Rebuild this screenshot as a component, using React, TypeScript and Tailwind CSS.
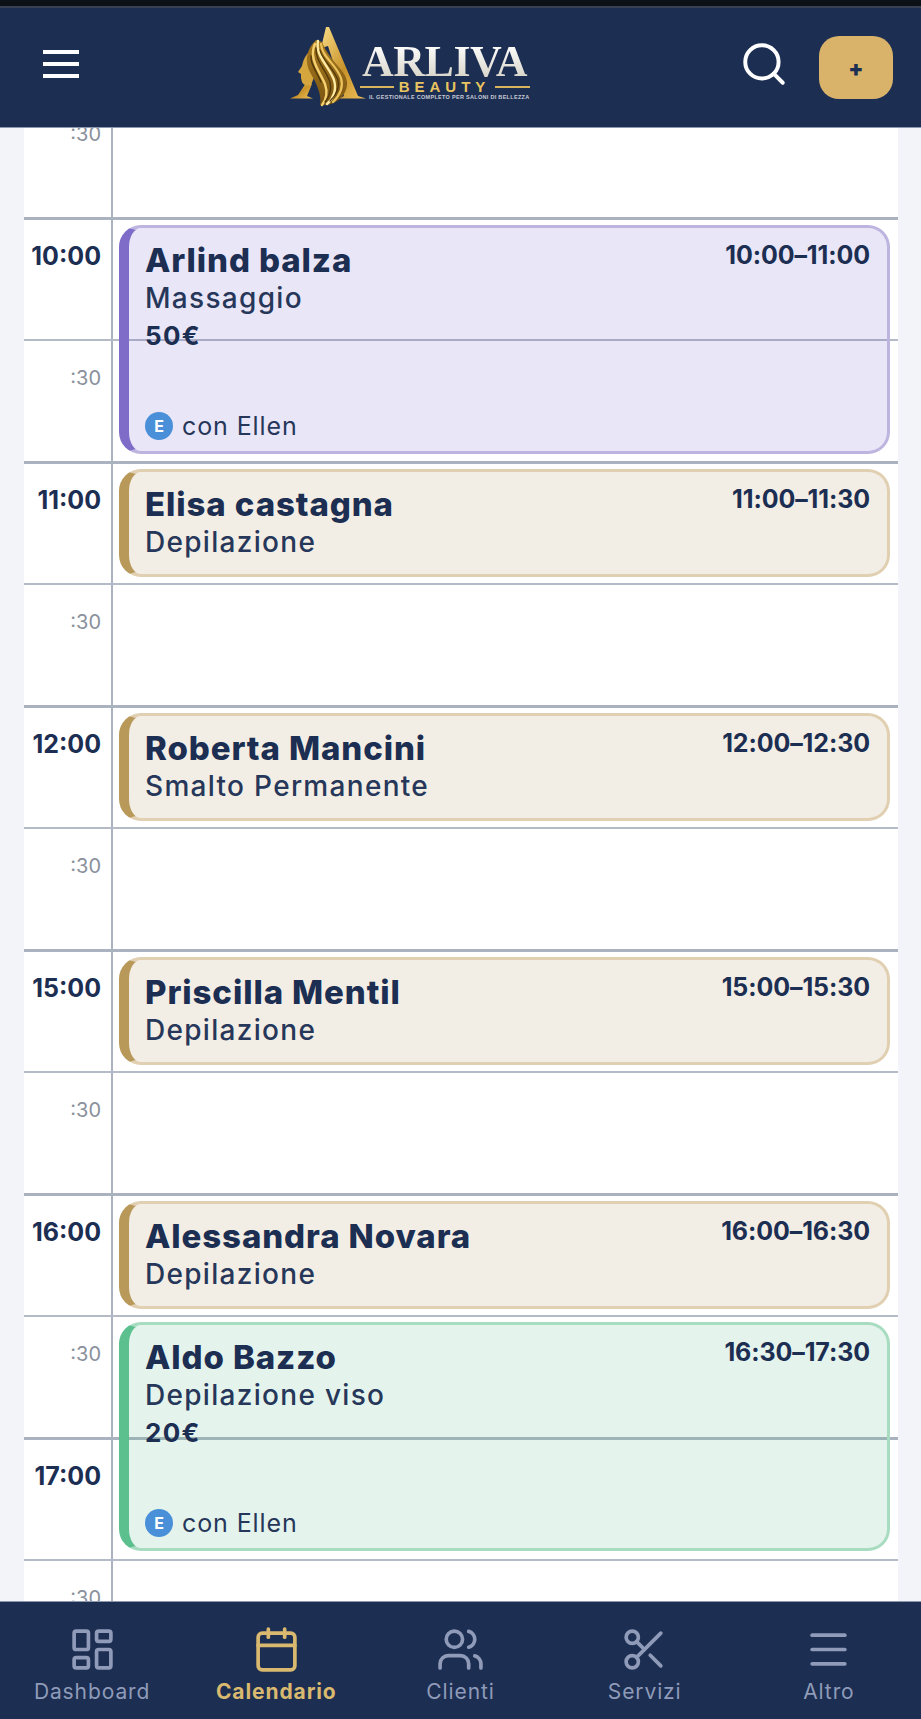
import { Calendar, LayoutDashboard, Menu, Scissors, Search, Users } from "lucide-react";

type Tone = "purple" | "tan" | "green";

interface Booking {
  name: string;
  service: string;
  time: string;
  tone: Tone;
  price?: string;
  staff?: string;
}

interface Slot {
  label: string;
  hour: boolean;
  booking?: Booking;
}

const slots: Slot[] = [
  { label: ":30", hour: false },
  {
    label: "10:00",
    hour: true,
    booking: { name: "Arlind balza", service: "Massaggio", time: "10:00–11:00", tone: "purple", price: "50€", staff: "Ellen" },
  },
  { label: ":30", hour: false },
  {
    label: "11:00",
    hour: true,
    booking: { name: "Elisa castagna", service: "Depilazione", time: "11:00–11:30", tone: "tan" },
  },
  { label: ":30", hour: false },
  {
    label: "12:00",
    hour: true,
    booking: { name: "Roberta Mancini", service: "Smalto Permanente", time: "12:00–12:30", tone: "tan" },
  },
  { label: ":30", hour: false },
  {
    label: "15:00",
    hour: true,
    booking: { name: "Priscilla Mentil", service: "Depilazione", time: "15:00–15:30", tone: "tan" },
  },
  { label: ":30", hour: false },
  {
    label: "16:00",
    hour: true,
    booking: { name: "Alessandra Novara", service: "Depilazione", time: "16:00–16:30", tone: "tan" },
  },
  {
    label: ":30",
    hour: false,
    booking: { name: "Aldo Bazzo", service: "Depilazione viso", time: "16:30–17:30", tone: "green", price: "20€", staff: "Ellen" },
  },
  { label: "17:00", hour: true },
  { label: ":30", hour: false },
];

const toneClasses: Record<Tone, string> = {
  purple: "bg-[#7c6bd0]/[0.17] border-[#bdb5e0] border-l-[#7f6cc8]",
  tan: "bg-[#f3eee5] border-[#e0cfb0] border-l-[#b8995a]",
  green: "bg-[#5cbf8e]/[0.17] border-[#a8dcc0] border-l-[#5cbf8e]",
};

const navItems = [
  { label: "Dashboard", icon: LayoutDashboard },
  { label: "Calendario", icon: Calendar, active: true },
  { label: "Clienti", icon: Users },
  { label: "Servizi", icon: Scissors },
  { label: "Altro", icon: Menu },
];

function LogoMark() {
  return (
    <svg viewBox="0 0 100 90" className="h-[90px] w-[100px] shrink-0">
      <defs>
        <linearGradient id="gold" x1="0" y1="0" x2="1" y2="1">
          <stop offset="0" stopColor="#f8dc86" />
          <stop offset="0.55" stopColor="#c8922a" />
          <stop offset="1" stopColor="#efc25a" />
        </linearGradient>
        <linearGradient id="hair" x1="0" y1="0" x2="0" y2="1">
          <stop offset="0" stopColor="#a87a1e" />
          <stop offset="1" stopColor="#7a5512" />
        </linearGradient>
      </defs>
      {/* the big A, hair sits on top of it */}
      <polygon points="42,7 45,7 74,76 82,78.5 55,78.5 60,76 44,26 37,28" fill="url(#gold)" />
      <polygon points="24,60 28,64 23,76 29,78.5 6,78.5 14,75" fill="url(#gold)" />
      {/* face */}
      <path d="M27,30 C20,36 19,42 18,46 L14,52 L17,54 L17,58 L18,62 C20,66 24,66 27,65 L33,50 Z" fill="#d5a53e" />
      {/* hair */}
      <path d="M32,20 C22,30 20,42 27,54 C33,64 38,76 36,85 C50,87 64,76 63,62 C62,50 46,42 38,22 Z" fill="url(#hair)" />
      <g fill="none" strokeLinecap="round">
        <path d="M31,24 C24,38 36,52 41,64 C44,73 42,80 38,85" stroke="#f4d070" strokeWidth="2.4" />
        <path d="M34,21 C31,36 45,46 50,60 C53,70 49,79 43,84" stroke="#ffeaa2" strokeWidth="2.4" />
        <path d="M37,24 C38,37 52,44 57,58 C60,68 55,76 49,82" stroke="#ecc35c" strokeWidth="2.2" />
        <path d="M27,36 C26,44 33,52 37,62" stroke="#4e360a" strokeWidth="1.4" />
        <path d="M32,28 C31,40 42,50 46,62 C48,70 46,76 41,82" stroke="#4e360a" strokeWidth="1.3" />
        <path d="M36,30 C38,40 49,47 54,60 C56,68 52,75 46,81" stroke="#4e360a" strokeWidth="1.2" />
      </g>
    </svg>
  );
}

function Logo() {
  return (
    <div className="mb-[6px] -ml-[5px] flex h-[90px] items-start">
      <LogoMark />
      <div className="-ml-[24px] flex w-[170px] flex-col items-stretch pt-[24px]">
        <div className="bg-linear-to-b from-white to-[#d6d2c6] bg-clip-text text-center font-['Liberation_Serif',serif] text-[44px] leading-[36px] font-bold tracking-[-0.5px] text-transparent">
          ARLIVA
        </div>
        <div className="flex items-center gap-[5px]">
          <div className="h-[2px] flex-1 bg-[#d8b45c]" />
          <div className="font-['Liberation_Sans',sans-serif] text-[15px] leading-[14px] font-bold tracking-[5px] text-[#e8c35f]">
            BEAUTY
          </div>
          <div className="h-[2px] flex-1 bg-[#d8b45c]" />
        </div>
        <div className="text-right font-['Liberation_Sans',sans-serif] text-[5.5px] leading-[7px] font-bold tracking-[0.3px] whitespace-nowrap text-[#c9ccd6]">
          IL GESTIONALE COMPLETO PER SALONI DI BELLEZZA
        </div>
      </div>
    </div>
  );
}

function BookingCard({ booking }: { booking: Booking }) {
  const tall = Boolean(booking.staff);
  return (
    <div
      className={`absolute top-[5px] right-[8px] left-[6px] z-10 flex flex-col justify-between rounded-[22px] border-[3px] border-l-[10px] pt-[12px] pr-[17px] pb-[10px] pl-[16px] ${toneClasses[booking.tone]} ${tall ? "h-[229px]" : "h-[108px]"}`}
    >
      <div>
        <div className="flex items-start justify-between">
          <div className="text-[33px] leading-[40px] font-extrabold tracking-[0.9px] text-[#1c2e52]">{booking.name}</div>
          <div className="text-[25px] leading-[31px] font-bold tracking-[-0.1px] text-[#1c2e52]">{booking.time}</div>
        </div>
        <div className="text-[28px] leading-[36px] font-medium tracking-[1.3px] text-[#26375a]">{booking.service}</div>
        {booking.price && <div className="text-[26px] leading-[39px] font-bold tracking-[1.3px] text-[#1c2e52]">{booking.price}</div>}
      </div>
      {booking.staff && (
        <div className="flex items-center gap-[9px]">
          <div className="flex h-[28px] w-[28px] items-center justify-center rounded-full bg-[#4a90d9] text-[16px] font-bold text-white">
            E
          </div>
          <div className="text-[25px] leading-[30px] tracking-[0.9px] text-[#26375a]">con {booking.staff}</div>
        </div>
      )}
    </div>
  );
}

function SlotRow({ slot }: { slot: Slot }) {
  return (
    <div
      className={`grid h-[122px] grid-cols-[89px_1fr] ${slot.hour ? "border-t-[3px] border-[#aab2c0]" : "border-t-2 border-[#b4bac6]"}`}
    >
      <div className={`border-r-2 border-[#aab2c0] pr-[10px] text-right ${slot.hour ? "pt-[20px]" : "pt-[22px]"}`}>
        {slot.hour ? (
          <span className="text-[25px] leading-[32px] font-bold text-[#1c2e52]">{slot.label}</span>
        ) : (
          <span className="text-[20px] leading-[30px] text-[#8a909c]">{slot.label}</span>
        )}
      </div>
      <div className="relative">{slot.booking && <BookingCard booking={slot.booking} />}</div>
    </div>
  );
}

export default function App() {
  return (
    <div className="flex h-screen flex-col overflow-hidden bg-[#f2f4f9] font-['Inter',sans-serif]">
      <div className="h-[8px] shrink-0 border-b-2 border-[#3a4152] bg-[#0c1118]" />

      <header className="relative z-20 flex h-[120px] shrink-0 items-center justify-between border-b border-[#8d97b0] bg-[#1c2e52] pr-[28px] pl-[43px]">
        <button className="mb-[8px] flex w-[36px] flex-col gap-[8px]">
          <span className="h-[4px] bg-white" />
          <span className="h-[4px] bg-white" />
          <span className="h-[4px] bg-white" />
        </button>
        <Logo />
        <div className="flex items-center gap-[30px]">
          <Search className="mb-[8px] h-[50px] w-[50px] text-white" strokeWidth={1.9} />
          <button className="flex h-[63px] w-[74px] items-center justify-center rounded-[20px] bg-[#d9b36a] text-[22px] leading-none font-black text-[#1c2e52]">
            +
          </button>
        </div>
      </header>

      <main className="min-h-0 flex-1 overflow-hidden pr-[23px] pl-[24px]">
        <div className="-mt-[33px] bg-white">
          {slots.map((slot, i) => (
            <SlotRow key={i} slot={slot} />
          ))}
        </div>
      </main>

      <nav className="relative z-20 grid h-[118px] shrink-0 grid-cols-5 border-t border-[#8d97b0] bg-[#1c2e52] pt-[23px]">
        {navItems.map((item) => {
          const Icon = item.icon;
          return (
            <div
              key={item.label}
              className={`flex flex-col items-center ${item.active ? "text-[#d9b96f]" : "text-[#8f9bb8]"}`}
            >
              <Icon className="h-[49px] w-[49px]" strokeWidth={1.8} />
              <span className={`pt-[3px] text-[21px] leading-[30px] tracking-[0.9px] ${item.active ? "font-bold" : "font-normal"}`}>{item.label}</span>
            </div>
          );
        })}
      </nav>
    </div>
  );
}
